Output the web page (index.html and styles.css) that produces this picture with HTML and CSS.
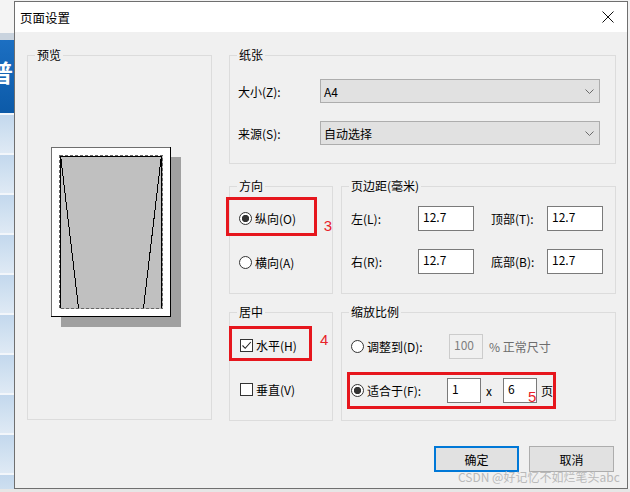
FILE: index.html
```html
<!DOCTYPE html>
<html lang="zh-CN">
<head>
    <meta charset="UTF-8">
    <title>页面设置</title>
    <link rel="stylesheet" href="styles.css">
</head>
<body>
    <div class="desk">
        <div class="side">
            <div class="side-top"></div>
            <div class="side-rule"></div>
            <div class="side-head"><span>普</span></div>
            <div class="side-list"></div>
        </div>
        <div class="win">
            <div class="titlebar">
                <span>页面设置</span>
                <svg width="12" height="12" viewBox="0 0 12 12"><path d="M0.5 0.5 L11.5 11.5 M11.5 0.5 L0.5 11.5" stroke="#111" stroke-width="1" fill="none"/></svg>
            </div>
            <div class="win-body">
                <div class="panes">
                    <div class="grp preview">
                        <div class="grp-title">预览</div>
                        <div class="preview-body">
                            <svg width="131" height="181" viewBox="0 0 131 181" shape-rendering="crispEdges">
                                <rect x="10" y="10" width="120" height="170" fill="#a0a0a0"/>
                                <rect x="0" y="0" width="120" height="170" fill="#fff"/>
                                <path d="M0.5 170 V0.5 H120" stroke="#6e6e6e" stroke-width="1" fill="none"/>
                                <path d="M0 169.5 H119.5 V0" stroke="#000" stroke-width="1" fill="none"/>
                                <rect x="8.5" y="8.5" width="103" height="153" fill="#c0c0c0" stroke="#666" stroke-width="1" stroke-dasharray="3 2"/>
                                <path d="M9.5 161 V9.5 H110.5 V161" stroke="#000" stroke-width="1" fill="none"/>
                                <path d="M10 12 L27.5 161" stroke="#000" stroke-width="1" fill="none"/>
                                <path d="M110 12 L92.5 161" stroke="#000" stroke-width="1" fill="none"/>
                            </svg>
                        </div>
                    </div>
                    <div class="right">
                        <div class="grp paper">
                            <div class="grp-title">纸张</div>
                            <div class="paper-body">
                                <div class="field">
                                    <label>大小(Z):</label>
                                    <div class="select"><span>A4</span><svg width="9" height="5" viewBox="0 0 9 5"><path d="M0.5 0.5 L4.5 4.5 L8.5 0.5" stroke="#6a6a6a" fill="none"/></svg></div>
                                </div>
                                <div class="field">
                                    <label>来源(S):</label>
                                    <div class="select"><span>自动选择</span><svg width="9" height="5" viewBox="0 0 9 5"><path d="M0.5 0.5 L4.5 4.5 L8.5 0.5" stroke="#6a6a6a" fill="none"/></svg></div>
                                </div>
                            </div>
                        </div>
                        <div class="pair pair-top">
                            <div class="grp">
                                <div class="grp-title">方向</div>
                                <div class="orient-body">
                                    <div class="mark-row">
                                        <div class="mark mark-orient">
                                            <span class="radio on"></span><span>纵向(O)</span>
                                        </div>
                                        <span class="note note-3">3</span>
                                    </div>
                                    <div class="opt opt-land"><span class="radio"></span><span>横向(A)</span></div>
                                </div>
                            </div>
                            <div class="grp">
                                <div class="grp-title">页边距(毫米)</div>
                                <div class="margins">
                                    <span>左(L):</span><div class="num">12.7</div>
                                    <span class="lbl2">顶部(T):</span><div class="num">12.7</div>
                                    <span>右(R):</span><div class="num">12.7</div>
                                    <span class="lbl2">底部(B):</span><div class="num">12.7</div>
                                </div>
                            </div>
                        </div>
                        <div class="pair pair-bottom">
                            <div class="grp">
                                <div class="grp-title">居中</div>
                                <div class="center-body">
                                    <div class="mark-row">
                                        <div class="mark mark-center">
                                            <span class="check"><svg width="11" height="11" viewBox="0 0 11 11"><path d="M1.5 5.5 L4.2 8.3 L9.8 2" stroke="#222" stroke-width="1.1" fill="none"/></svg></span><span>水平(H)</span>
                                        </div>
                                        <span class="note note-4">4</span>
                                    </div>
                                    <div class="opt opt-vert"><span class="check"></span><span>垂直(V)</span></div>
                                </div>
                            </div>
                            <div class="grp">
                                <div class="grp-title">缩放比例</div>
                                <div class="scale-body">
                                    <div class="scale-row">
                                        <span class="radio"></span><span class="scale-label">调整到(D):</span>
                                        <div class="num small off">100</div>
                                        <span class="muted">% 正常尺寸</span>
                                    </div>
                                    <div class="mark mark-scale">
                                        <span class="radio on"></span><span class="scale-label">适合于(F):</span>
                                        <div class="num small">1</div>
                                        <span class="times">x</span>
                                        <div class="num small">6</div>
                                        <span class="page">页</span>
                                        <span class="note note-5">5</span>
                                    </div>
                                </div>
                            </div>
                        </div>
                    </div>
                </div>
                <div class="btns">
                    <div class="btn primary">确定</div>
                    <div class="btn">取消</div>
                </div>
            </div>
            <div class="watermark">CSDN @好记忆不如烂笔头abc</div>
        </div>
    </div>
    <div class="strip"></div>
</body>
</html>
```

FILE: styles.css
```css
* { box-sizing: border-box; }
body { margin: 0; width: 630px; height: 492px; overflow: hidden; background: #f2f2f2; font-family: "Noto Sans CJK SC", "Liberation Sans", sans-serif; font-size: 12px; color: #000; }

.desk { display: flex; height: 489px; }
.side { width: 14px; flex: none; display: flex; flex-direction: column; overflow: hidden; }
.side-top { height: 33px; background: #f4f4f4; }
.side-rule { height: 7px; background: #c9d3de; }
.side-head { height: 73px; background: linear-gradient(#1c6fc2, #0c5aa8); color: #fff; font-size: 24px; line-height: 64px; font-weight: bold; white-space: nowrap; }
.side-head span { margin-left: -11px; }
.side-list { flex: 1; background: repeating-linear-gradient(180deg, #f2f6fb 0 2px, #c3d8ed 2px, #dfeaf5 40px); }

.win { position: relative; width: 614px; height: 488px; margin-top: 1px; border: 1px solid #6f6f6f; background: #f0f0f0; display: flex; flex-direction: column; }
.titlebar { height: 30px; flex: none; background: #fff; display: flex; align-items: center; justify-content: space-between; padding: 0 13px 0 5px; font-size: 12.5px; }
.win-body { padding: 23px 11px 0 12px; }
.panes { display: grid; grid-template-columns: 185px 387px; column-gap: 17px; }

.grp { border: 1px solid #dcdcdc; }
.grp-title { margin: -9px 0 -7px 7px; padding: 0 2px; height: 16px; line-height: 16px; width: fit-content; background: #f0f0f0; }

.preview { height: 365px; }
.preview-body { padding: 91px 0 0 23px; }
.preview-body svg { display: block; }

.right { display: flex; flex-direction: column; }
.paper { height: 109px; }
.paper-body { padding: 23px 15px 0 8px; display: flex; flex-direction: column; gap: 18px; }
.field { display: flex; align-items: center; }
.field label { width: 82px; }
.select { flex: 1; height: 24px; border: 1px solid #adadad; background: #e1e1e1; display: flex; align-items: center; justify-content: space-between; padding: 0 5px 0 3px; }

.pair { display: grid; grid-template-columns: 104px 275px; column-gap: 8px; }
.pair-top { height: 108px; margin-top: 22px; }
.pair-bottom { height: 109px; margin-top: 18px; }

.radio { width: 13px; height: 13px; flex: none; border: 1px solid #333; border-radius: 50%; background: #fff; }
.radio.on { background: radial-gradient(circle, #333 0 3.4px, #fff 3.9px); }
.check { width: 13px; height: 13px; flex: none; border: 1px solid #333; background: #fff; display: flex; align-items: center; justify-content: center; }
.check svg { display: block; }

.mark { border: 3px solid #e6161d; display: flex; align-items: center; gap: 3px; }
.mark-row { display: flex; }
.note { color: #e8222a; font-family: "Liberation Sans", sans-serif; font-size: 15px; line-height: 18px; }
.opt { display: flex; align-items: center; gap: 3px; height: 20px; }

.orient-body { display: flex; flex-direction: column; }
.mark-orient { width: 93px; height: 39px; margin: 10px 0 0 -4px; padding: 3px 0 0 10px; }
.note-3 { align-self: flex-end; margin: 0 0 1px 7px; }
.opt-land { margin-top: 16px; padding-left: 9px; }

.center-body { display: flex; flex-direction: column; }
.mark-center { width: 83px; height: 35px; margin: 13px 0 0 -1px; padding: 4px 0 0 8px; }
.note-4 { align-self: center; margin: 6px 0 0 8px; }
.opt-vert { margin-top: 18px; padding-left: 10px; }

.margins { padding: 19px 0 0 9px; display: grid; grid-template-columns: 67px 56px 73px 56px; grid-auto-rows: 25px; row-gap: 18px; align-items: center; }
.lbl2 { padding-left: 17px; }
.num { height: 25px; border: 1px solid #7a7a7a; background: #fff; padding: 0 4px; line-height: 20px; }
.num.small { width: 34px; flex: none; }
.num.off { background: #f0f0f0; border-color: #cccccc; color: #808080; }

.scale-body { padding-left: 9px; display: flex; flex-direction: column; }
.scale-row { display: flex; align-items: center; height: 25px; margin-top: 21px; }
.scale-label { width: 82px; margin-left: 3px; }
.muted { color: #6d6d6d; margin-left: 6px; }
.mark-scale { position: relative; width: 209px; height: 37px; margin: 13px 0 0 -4px; padding: 0 0 0 1px; gap: 0; }
.times { margin: 0 11px 0 5px; }
.page { margin-left: 4px; }
.note-5 { position: absolute; left: 178px; top: 14px; line-height: 16px; }

.btns { display: flex; justify-content: flex-end; gap: 10px; margin: 25px 2px 0 0; }
.btn { width: 85px; height: 26px; border: 1px solid #adadad; background: #e1e1e1; display: flex; align-items: center; justify-content: center; }
.btn.primary { border: 2px solid #0078d7; }

.watermark { position: absolute; left: 443px; top: 467px; line-height: 16px; font-size: 12px; color: #b9b9b9; white-space: nowrap; }

.strip { height: 3px; background: #e6e6e6; }
```
